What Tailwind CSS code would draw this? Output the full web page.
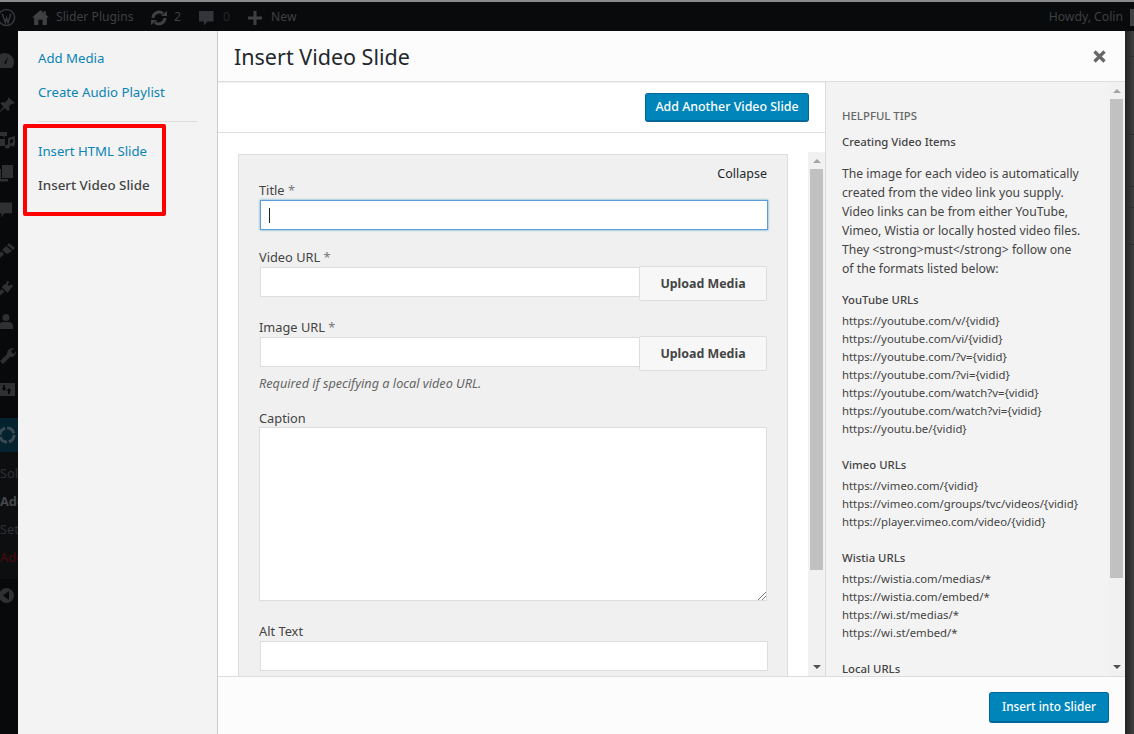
<!DOCTYPE html>
<html lang="en">
<head>
  <meta charset="UTF-8">
  <title>Insert Video Slide</title>
  <script src="https://cdn.jsdelivr.net/npm/@tailwindcss/browser@4"></script>
</head>
<body class="relative w-[1134px] h-[734px] overflow-hidden bg-[#2b2b2b] font-['Noto_Sans','Open_Sans',sans-serif] text-[12.800px] text-[#444]">

<!-- dimmed admin page behind the modal -->
<div class="h-[2px] bg-[#8a8a8a]"></div>
<div class="relative h-[29px] pt-[2px] bg-[#090a0c] flex items-center text-[12.200px] text-[#3e4042]">
  <svg class="w-[19px] h-[19px] ml-[-3px]" viewBox="0 0 20 20"><circle cx="10" cy="10" r="8.500" fill="none" stroke="#35373a" stroke-width="1.600"/><path d="M5.500 6l3.300 9.500 1.300-5 1.500 5 3-9.500" fill="none" stroke="#35373a" stroke-width="1.600"/></svg>
  <svg class="w-[17px] h-[17px] ml-[16px]" viewBox="0 0 16 16" fill="#3e4042"><path d="M8 1L0 8h2v7h4v-5h4v5h4V8h2l-3-2.600V2h-2v1.700z"/></svg>
  <span class="ml-[7px] w-[77px] whitespace-nowrap">Slider Plugins</span>
  <svg class="w-[18px] h-[18px] ml-[17px]" viewBox="0 0 18 18" fill="none" stroke="#3e4042" stroke-width="3"><path d="M3 9a6 6 0 0 1 10-4.300M15 9a6 6 0 0 1-10 4.300"/><path d="M11 7h6V2zM7 11H1v5z" fill="#3e4042" stroke="none"/></svg>
  <span class="ml-[6px] w-[7px]">2</span>
  <svg class="w-[15px] h-[16px] ml-[18px]" viewBox="0 0 15 16" fill="#33353a"><path d="M0 1h14.500v10.500H8.500L5 15.500v-4H0z"/></svg>
  <span class="ml-[9px] w-[6px] text-[#26282a]">0</span>
  <svg class="w-[14px] h-[14px] ml-[19px]" viewBox="0 0 14 14" fill="#3e4042"><path d="M5.500 0h3v5.500H14v3H8.500V14h-3V8.500H0v-3h5.500z"/></svg>
  <span class="ml-[9px]">New</span>
  <span class="ml-auto mr-[11px]">Howdy, Colin</span>
  <div class="absolute right-0 top-[7px] w-[4px] h-[17px] bg-[#3f4042]"></div>
</div>
<div class="absolute left-0 top-[31px] w-[18px] h-[703px] bg-[#08090b] overflow-hidden">
  <div class="absolute left-0 top-[387px] w-[18px] h-[34px] bg-[#04232f]"></div>
  <div class="absolute left-0 top-[421px] w-[18px] h-[127px] bg-[#0d0e10]"></div>
  <span class="absolute left-0 top-[433px] text-[#2f3133]">Sol</span>
  <span class="absolute left-0 top-[461px] font-bold text-[#45474a]">Add</span>
  <span class="absolute left-0 top-[489px] text-[#2f3133]">Set</span>
  <span class="absolute left-0 top-[517px] text-[#4a0b0b]">Add</span>
  <svg class="absolute left-[-5px] top-[20px] w-[20px] h-[20px]" viewBox="0 0 20 20" fill="#2e3032"><path d="M10 2a9 9 0 0 0-9 9c0 2.300.8 4.300 2 6h14a9.800 9.800 0 0 0 2-6 9 9 0 0 0-9-9zm1 11l-2-1 4-6z"/></svg>
  <svg class="absolute left-[-3px] top-[66px] w-[18px] h-[18px]" viewBox="0 0 18 18" fill="#2e3032"><path d="M11 0l7 6-2 1-1-.500-3 3 .5 3-1.500 1.500-3-3-7 5.500 5.500-7-3-3L5 5l3 .5 3-3V1z"/></svg>
  <svg class="absolute left-[-1px] top-[100px] w-[17px] h-[19px]" viewBox="0 0 17 19" fill="#2e3032"><path d="M1 1h7v4H6L5 7 4 5H1zM1 8h5v7H1zM16 5v8.500a2.500 2 0 1 1-2-2V8l-3 1v6.500a2.500 2 0 1 1-2-2V7z"/></svg>
  <svg class="absolute left-[-2px] top-[133px] w-[15px] h-[19px]" viewBox="0 0 15 19" fill="#2e3032"><path d="M4 1h11v13H4z"/><path d="M0 5h3v10h7v2.500H0z"/></svg>
  <svg class="absolute left-[-4px] top-[170px] w-[16px] h-[18px]" viewBox="0 0 15 16" fill="#2e3032"><path d="M0 1h15v10H8l-3 4v-4H0z"/></svg>
  <svg class="absolute left-[-3px] top-[211px] w-[19px] h-[19px]" viewBox="0 0 19 19" fill="#2e3032"><path d="M12 1l6 5-2 2-6-5zM9 4l6 5-5 3-5-4zM4 9l3 3-5 5-1-1z"/></svg>
  <svg class="absolute left-[-3px] top-[247px] w-[18px] h-[19px]" viewBox="0 0 19 19" fill="#2e3032"><path d="M11 2l2 2-2 2 2 2 2-2 2 2-3 3v1l-3 3-6-6 3-3h1zM5 11l3 3-5 4-2-2z"/></svg>
  <svg class="absolute left-[-2px] top-[282px] w-[17px] h-[17px]" viewBox="0 0 17 17" fill="#2e3032"><circle cx="8" cy="4.500" r="3.500"/><path d="M1 16v-3c0-3 3-4 4-4h6c1 0 4 1 4 4v3z"/></svg>
  <svg class="absolute left-[-2px] top-[316px] w-[18px] h-[18px]" viewBox="0 0 18 18" fill="#2e3032"><path d="M16 1l-3 3 1 2 2 1 2-3c0 4-2 6-6 6l-7 7-3-3 7-7c0-4 3-6 7-6z"/></svg>
  <svg class="absolute left-0 top-[351px] w-[15px] h-[15px]" viewBox="0 0 15 15" fill="#2e3032"><path d="M0 1h15v13H0zM3 3v3H1.500L4 9l2.500-3H5V3zM10 12V9h1.500L9 6 6.500 9H8v3z"/></svg>
  <svg class="absolute left-[-1px] top-[557px] w-[15px] h-[15px]" viewBox="0 0 15 15" fill="#2e3032"><path d="M7.500 0a7.500 7.500 0 1 0 0 15 7.500 7.500 0 0 0 0-15zM10 3v9L4 7.500z"/></svg>
  <svg class="absolute left-[-3px] top-[390px] w-[20px] h-[28px]" viewBox="0 0 20 28" fill="none" stroke="#3b4a50" stroke-width="3"><circle cx="10" cy="14" r="7" stroke-dasharray="9 2"/></svg>
</div>
<div class="absolute left-[1125px] top-[31px] w-[9px] h-[703px] bg-gradient-to-r from-[#242424] to-[#404040] flex flex-col">
  <div class="h-[26px] border-b border-[#2c2c2c]"></div>
  <div class="h-[78px] border-b border-[#2c2c2c]"></div>
  <div class="h-[52px] border-b border-[#2c2c2c]"></div>
  <div class="h-[21px] border-b border-[#2c2c2c]"></div>
  <div class="h-[37px] border-b border-[#2c2c2c]"></div>
</div>

<!-- modal -->
<div class="absolute left-[18px] top-[31px] w-[1107px] h-[703px] bg-white flex">
  <aside class="w-[200px] shrink-0 bg-[#f3f3f3] border-r border-[#cccccc] pt-[17px] pl-[20px] pr-[20px] text-[13.200px] leading-[20px]">
    <a class="block text-[#0a84b4] mb-[14px]">Add Media</a>
    <a class="block text-[#0a84b4] mb-[19px]">Create Audio Playlist</a>
    <div class="h-px w-[159px] bg-[#dddddd] mb-[19px]"></div>
    <a class="block text-[#0a84b4] mb-[14px]">Insert HTML Slide</a>
    <a class="block text-[#444] font-medium text-[13.400px]">Insert Video Slide</a>
  </aside>

  <div class="flex-1 min-w-0 flex flex-col">
    <header class="h-[51px] shrink-0 bg-[#fcfcfc] border-b border-[#dddddd] shadow-[0_1px_1px_rgba(0,0,0,0.05)] flex items-center justify-between pl-[16px] pr-[19px]">
      <h1 class="mt-[2px] text-[21.500px] text-[#23282d] font-normal">Insert Video Slide</h1>
      <svg class="w-[13px] h-[13px]" viewBox="0 0 13 13" fill="none" stroke="#666" stroke-width="3.200"><path d="M1.500 1.500l10 10M11.500 1.500l-10 10"/></svg>
    </header>

    <div class="flex-1 min-h-0 flex">
      <main class="w-[607px] shrink-0 flex flex-col">
        <div class="h-[51px] shrink-0 border-b border-[#dddddd] flex items-center justify-end pr-[16px]">
          <button class="h-[29px] w-[164px] pt-[1px] bg-[#0085ba] rounded-[3px] border border-[#006799] border-b-2 text-white font-medium text-[12.400px]">Add Another Video Slide</button>
        </div>
        <div class="flex-1 min-h-0 flex overflow-hidden">
          <div class="pl-[20px] pt-[21px] w-[590px] shrink-0 overflow-hidden">
            <div class="w-[550px] h-[560px] bg-[#f0f0f0] border border-[#dddddd] pl-[20px] pr-[20px] pt-[6px]">
              <div class="text-right text-[#23282d] leading-[26px] h-[20px] text-[12.500px]">Collapse</div>
              <label class="block leading-[18px]">Title <span class="text-[#777]">*</span></label>
              <div class="mt-[1px] h-[30px] ml-px mr-[-1px] bg-white border border-[#5b9dd9] shadow-[0_0_2px_rgba(30,140,190,0.8)] flex items-center pl-[8px]"><div class="w-px h-[15px] bg-[#222]"></div></div>

              <label class="block mt-[18px] leading-[18px]">Video URL <span class="text-[#777]">*</span></label>
              <div class="flex items-start h-[35px] ml-px">
                <div class="flex-1 mt-[1px] h-[30px] bg-white border border-[#dddddd] border-r-0"></div>
                <button class="w-[128px] h-[35px] pt-[1px] bg-[#f7f7f7] border border-[#dddddd] rounded-[2px] font-bold text-[#444] text-[12.400px]">Upload Media</button>
              </div>

              <label class="block mt-[17px] leading-[18px]">Image URL <span class="text-[#777]">*</span></label>
              <div class="flex items-start h-[35px] ml-px">
                <div class="flex-1 mt-[1px] h-[30px] bg-white border border-[#dddddd] border-r-0"></div>
                <button class="w-[128px] h-[35px] pt-[1px] bg-[#f7f7f7] border border-[#dddddd] rounded-[2px] font-bold text-[#444] text-[12.400px]">Upload Media</button>
              </div>
              <p class="mt-[3px] italic text-[12.700px] leading-[18px] text-[#666]">Required if specifying a local video URL.</p>

              <label class="block mt-[17px] leading-[18px]">Caption</label>
              <div class="relative h-[174px] bg-white border border-[#dddddd]">
                <svg class="absolute right-0 bottom-0 w-[9px] h-[9px]" viewBox="0 0 9 9" stroke="#777" fill="none"><path d="M1 9l8-8M5 9l4-4"/></svg>
              </div>

              <label class="block mt-[21px] leading-[18px]">Alt Text</label>
              <div class="mt-[1px] ml-px mr-[-1px] h-[30px] bg-white border border-[#dddddd]"></div>
            </div>
          </div>
          <!-- form scrollbar -->
          <div class="w-[17px] shrink-0 bg-[#f1f1f1] flex flex-col items-center mt-[19px] pt-[7px]">
            <div class="h-0 w-0 border-x-[4px] border-x-transparent border-b-[4px] border-b-[#a3a3a3]"></div>
            <div class="w-[13px] h-[401px] mt-[6px] bg-[#c1c1c1]"></div>
            <div class="mt-auto mb-[7px] h-0 w-0 border-x-[4px] border-x-transparent border-t-[4px] border-t-[#505050]"></div>
          </div>
        </div>
      </main>

      <!-- helpful tips -->
      <section class="flex-1 min-w-0 bg-[#f3f3f3] border-l border-[#dddddd] flex overflow-hidden">
        <div class="w-[282px] shrink-0 pl-[16px] pt-[25px] text-[11.350px] leading-[18px] text-[#444] overflow-hidden">
          <h2 class="uppercase text-[11.400px] font-medium text-[#666] leading-[18px]">Helpful Tips</h2>
          <h3 class="mt-[8px] font-medium">Creating Video Items</h3>
          <p class="mt-[13px] text-[12.200px] leading-[19px] w-[242px]">The image for each video is automatically created from the video link you supply. Video links can be from either YouTube, Vimeo, Wistia or locally hosted video files. They &lt;strong&gt;must&lt;/strong&gt; follow one of the formats listed below:</p>
          <h3 class="mt-[13px] font-medium">YouTube URLs</h3>
          <ul class="mt-[3px]">
            <li>https://youtube.com/v/{vidid}</li>
            <li>https://youtube.com/vi/{vidid}</li>
            <li>https://youtube.com/?v={vidid}</li>
            <li>https://youtube.com/?vi={vidid}</li>
            <li>https://youtube.com/watch?v={vidid}</li>
            <li>https://youtube.com/watch?vi={vidid}</li>
            <li>https://youtu.be/{vidid}</li>
          </ul>
          <h3 class="mt-[18px] font-medium">Vimeo URLs</h3>
          <ul class="mt-[3px]">
            <li>https://vimeo.com/{vidid}</li>
            <li>https://vimeo.com/groups/tvc/videos/{vidid}</li>
            <li>https://player.vimeo.com/video/{vidid}</li>
          </ul>
          <h3 class="mt-[18px] font-medium">Wistia URLs</h3>
          <ul class="mt-[3px]">
            <li>https://wistia.com/medias/*</li>
            <li>https://wistia.com/embed/*</li>
            <li>https://wi.st/medias/*</li>
            <li>https://wi.st/embed/*</li>
          </ul>
          <h3 class="mt-[18px] font-medium">Local URLs</h3>
        </div>
        <!-- tips scrollbar -->
        <div class="w-[17px] shrink-0 bg-[#f1f1f1] flex flex-col items-center pt-[7px]">
          <div class="h-0 w-0 border-x-[4px] border-x-transparent border-b-[4px] border-b-[#a3a3a3]"></div>
          <div class="w-[13px] h-[479px] mt-[6px] bg-[#c1c1c1]"></div>
          <div class="mt-auto mb-[7px] h-0 w-0 border-x-[4px] border-x-transparent border-t-[4px] border-t-[#505050]"></div>
        </div>
      </section>
    </div>

    <footer class="h-[58px] shrink-0 bg-[#fcfcfc] border-t border-[#dddddd] flex items-center justify-end pr-[16px] pt-[3px]">
      <button class="h-[31px] w-[120px] pt-[1px] bg-[#0085ba] rounded-[3px] border border-[#006799] border-b-2 text-white font-medium text-[11.800px]">Insert into Slider</button>
    </footer>
  </div>
</div>

<!-- red annotation box -->
<div class="absolute left-[23px] top-[124px] w-[143px] h-[92px] border-[4px] border-[#ff0000] rounded-[2px]"></div>
</body>
</html>
